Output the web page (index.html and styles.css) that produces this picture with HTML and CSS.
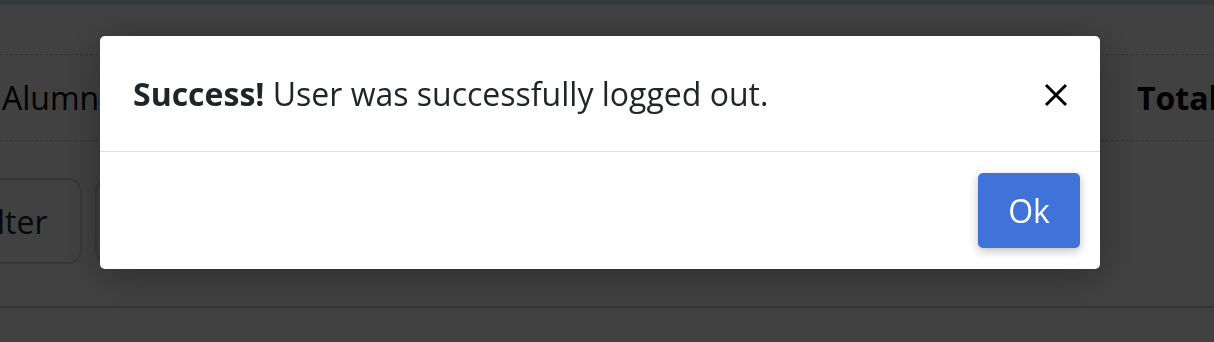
FILE: index.html
```html
<!DOCTYPE html>
<html lang="en">
<head>
<meta charset="utf-8">
<title>Logged out</title>
<link rel="stylesheet" href="styles.css">
</head>
<body>
<div class="page">
  <div class="topbar"></div>
  <div class="stats">
    <span class="stat">Alumni</span>
    <span class="stat stat-total">Total</span>
  </div>
  <div class="filters">
    <button class="chip" type="button">Filter</button>
    <button class="chip" type="button">Sort</button>
  </div>
  <div class="divider"></div>
</div>
<div class="backdrop"></div>
<div class="modal" role="dialog">
  <div class="modal-header">
    <p class="message"><strong>Success!</strong> User was successfully logged out.</p>
    <button class="close" type="button" aria-label="Close">
      <svg viewBox="0 0 24 24" width="24" height="24"><path d="M2 2 L22 22 M22 2 L2 22" stroke="#000" stroke-width="3" fill="none"/></svg>
    </button>
  </div>
  <div class="modal-footer">
    <button class="ok" type="button">Ok</button>
  </div>
</div>
</body>
</html>
```
FILE: styles.css
```css
html, body {
  margin: 0;
  padding: 0;
  height: 100%;
  overflow: hidden;
}
body {
  background: #ffffff;
  font-family: "Open Sans", "Liberation Sans", sans-serif;
  color: #212529;
}
.page {
  width: 1214px;
}
.topbar {
  height: 5px;
  background: #d8e7f3;
}
.stats {
  margin-top: 49px;
  height: 85px;
  border-top: 1px dashed #c8c8c8;
  border-bottom: 1px dashed #c8c8c8;
  display: flex;
  align-items: center;
  justify-content: space-between;
  padding-left: 2px;
  font-size: 32px;
  color: #000;
}
.stat-total {
  font-weight: 700;
  margin-right: -50px;
  width: 127px;
  white-space: nowrap;
}
.filters {
  margin-top: 37px;
  display: flex;
  gap: 13px;
  margin-left: -62px;
}
.chip {
  height: 86px;
  width: 144px;
  border: 2px solid #dcdcdc;
  border-radius: 14px;
  background: #fff;
  font-family: "Open Sans", "Liberation Sans", sans-serif;
  font-size: 32px;
  color: #212529;
  padding: 0;
  text-align: center;
}
.divider {
  margin-top: 42px;
  height: 2px;
  background: #d3d3d3;
}
.backdrop {
  position: fixed;
  inset: 0;
  background: rgba(0, 0, 0, 0.745);
}
.modal {
  position: fixed;
  left: 100px;
  top: 36px;
  width: 1000px;
  background: #fff;
  border-radius: 5px;
  box-shadow: 0 6px 40px rgba(0, 0, 0, 0.35);
}
.modal-header {
  height: 116px;
  box-sizing: border-box;
  padding: 2px 32px 0 33px;
  display: flex;
  align-items: center;
  justify-content: space-between;
  border-bottom: 1px solid #dee2e6;
}
.message {
  margin: 0;
  font-size: 32px;
  color: #212529;
  line-height: 1.2;
}
.message strong {
  font-weight: 700;
}
.close {
  border: 0;
  background: transparent;
  padding: 0;
  width: 24px;
  height: 24px;
  display: flex;
  margin-right: 0;
}
.modal-footer {
  display: flex;
  justify-content: flex-end;
  padding: 21px 20px;
}
.ok {
  width: 102px;
  height: 75px;
  border: 0;
  border-radius: 5px;
  background: #3f73d9;
  color: #fff;
  font-family: "Open Sans", "Liberation Sans", sans-serif;
  font-size: 32px;
  box-shadow: 0 3px 10px rgba(0, 0, 0, 0.25);
  padding: 0;
}
```
